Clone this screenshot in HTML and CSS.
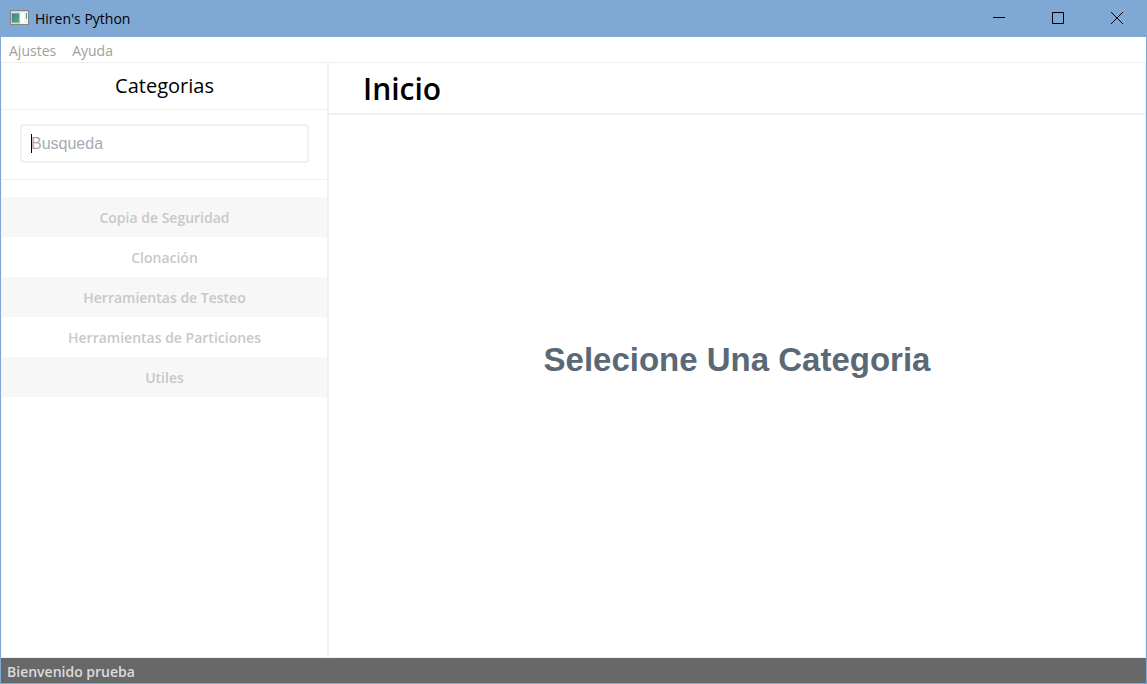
FILE: index.html
```html
<!DOCTYPE html>
<html lang="es">
<head>
<meta charset="utf-8">
<title>Hiren's Python</title>
<link rel="stylesheet" href="styles.css">
</head>
<body>
<div class="window">
  <header class="titlebar">
    <svg class="app-icon" width="20" height="16" viewBox="0 0 20 16" aria-hidden="true">
      <defs>
        <linearGradient id="screen" x1="0" y1="0" x2="1" y2="1">
          <stop offset="0" stop-color="#3b78a4"/>
          <stop offset="1" stop-color="#5cb56c"/>
        </linearGradient>
      </defs>
      <rect x="1.500" y="0.500" width="18" height="14" fill="#f3f3f3" stroke="#858585"/>
      <path d="M2 1.500h17" stroke="#d4d4d4"/>
      <rect x="2.500" y="3" width="8" height="10" fill="url(#screen)" stroke="#b7c9c4"/>
      <rect x="12" y="3" width="3" height="10" fill="#fff"/>
      <rect x="17" y="3" width="1" height="6" fill="url(#screen)"/>
    </svg>
    <span class="window-title">Hiren's Python</span>
    <div class="window-controls">
      <button class="control" type="button" aria-label="Minimizar">
        <svg width="12" height="12" viewBox="0 0 12 12"><path d="M0 5.500h12"/></svg>
      </button>
      <button class="control" type="button" aria-label="Maximizar">
        <svg width="12" height="12" viewBox="0 0 12 12"><path d="M.5.5h11v11H.5z"/></svg>
      </button>
      <button class="control" type="button" aria-label="Cerrar">
        <svg width="12" height="12" viewBox="0 0 12 12"><path d="M0 0l12 12M12 0L0 12"/></svg>
      </button>
    </div>
  </header>
  <nav class="menubar">
    <button class="menu-item" type="button">Ajustes</button>
    <button class="menu-item" type="button">Ayuda</button>
  </nav>
  <div class="workspace">
    <aside class="sidebar">
      <h2 class="sidebar-title">Categorias</h2>
      <div class="search">
        <input class="search-input" type="text" placeholder="Busqueda" aria-label="Busqueda">
        <span class="caret"></span>
      </div>
      <div class="categories">
        <button class="category" type="button">Copia de Seguridad</button>
        <button class="category" type="button">Clonación</button>
        <button class="category" type="button">Herramientas de Testeo</button>
        <button class="category" type="button">Herramientas de Particiones</button>
        <button class="category" type="button">Utiles</button>
      </div>
    </aside>
    <main class="content">
      <h1 class="content-title">Inicio</h1>
      <div class="content-body">
        <p class="prompt">Selecione Una Categoria</p>
      </div>
    </main>
  </div>
  <footer class="statusbar">Bienvenido prueba</footer>
</div>
</body>
</html>
```
FILE: styles.css
```css
* {
  box-sizing: border-box;
}

body {
  margin: 0;
  background: #fff;
  font-family: "Open Sans", "Noto Sans", sans-serif;
}

button {
  margin: 0;
  border: 0;
  padding: 0;
  background: none;
  font-family: inherit;
}

.window {
  display: flex;
  flex-direction: column;
  min-height: 100vh;
  border: 1px solid #80a8d5;
  border-top: 0;
}

.titlebar {
  display: flex;
  align-items: center;
  height: 37px;
  padding-bottom: 1px;
  padding-left: 8px;
  background: #80a8d5;
}

.app-icon {
  margin-right: 6px;
}

.window-title {
  font-size: 14px;
  color: #000;
}

.window-controls {
  display: flex;
  align-self: stretch;
  margin-left: auto;
}

.control {
  display: flex;
  align-items: center;
  justify-content: center;
  width: 59px;
}

.control svg {
  fill: none;
  stroke: #000;
}

.menubar {
  display: flex;
  gap: 16px;
  height: 26px;
  padding: 1px 8px 0;
  border-bottom: 1px solid #f0f0f0;
}

.menu-item {
  font-size: 14px;
  color: #a0a0a0;
}

.workspace {
  display: grid;
  grid-template-columns: 328px 1fr;
  flex: 1;
}

.sidebar {
  border-right: 2px solid #eff0f1;
  border-left: 1px solid #f4f5f6;
}

.sidebar-title {
  margin: 0;
  border-bottom: 1px solid #eff0f1;
  font-size: 20px;
  font-weight: 400;
  line-height: 46px;
  text-align: center;
  color: #000;
}

.search {
  position: relative;
  padding: 14px 18px 16px;
  border-bottom: 1px solid #eff0f1;
}

.search-input {
  display: block;
  width: 100%;
  height: 39px;
  padding: 0 9px;
  border: 2px solid #edf1f5;
  border-radius: 4px;
  background: #fff;
  font-family: "Liberation Sans", Arial, sans-serif;
  font-size: 16px;
  color: #000;
  outline: none;
}

.search-input::placeholder {
  color: #a4abb5;
  opacity: 1;
}

.caret {
  position: absolute;
  top: 24px;
  left: 29px;
  width: 1px;
  height: 19px;
  background: #000;
}

.categories {
  display: flex;
  flex-direction: column;
  padding-top: 17px;
}

.category {
  height: 40px;
  font-size: 14px;
  font-weight: 600;
  color: #c8c8c8;
}

.category:nth-child(odd) {
  background: #f7f7f7;
}

.content {
  display: flex;
  flex-direction: column;
  border-right: 1px solid #eff0f1;
}

.content-title {
  margin: 0;
  padding: 1px 34px 0;
  border-bottom: 2px solid #eff0f1;
  font-size: 30px;
  font-weight: 600;
  line-height: 49px;
  color: #000;
}

.content-body {
  display: flex;
  flex: 1;
  align-items: center;
  justify-content: center;
  padding-bottom: 52px;
}

.prompt {
  margin: 0;
  font-family: "Liberation Sans", Arial, sans-serif;
  font-size: 33px;
  font-weight: 700;
  color: #5b6875;
}

.statusbar {
  height: 26px;
  padding: 0 6px;
  border-top: 1px solid #eff0f1;
  background: #686868;
  font-size: 14px;
  font-weight: 600;
  line-height: 27px;
  color: #dcdcdc;
}
```
